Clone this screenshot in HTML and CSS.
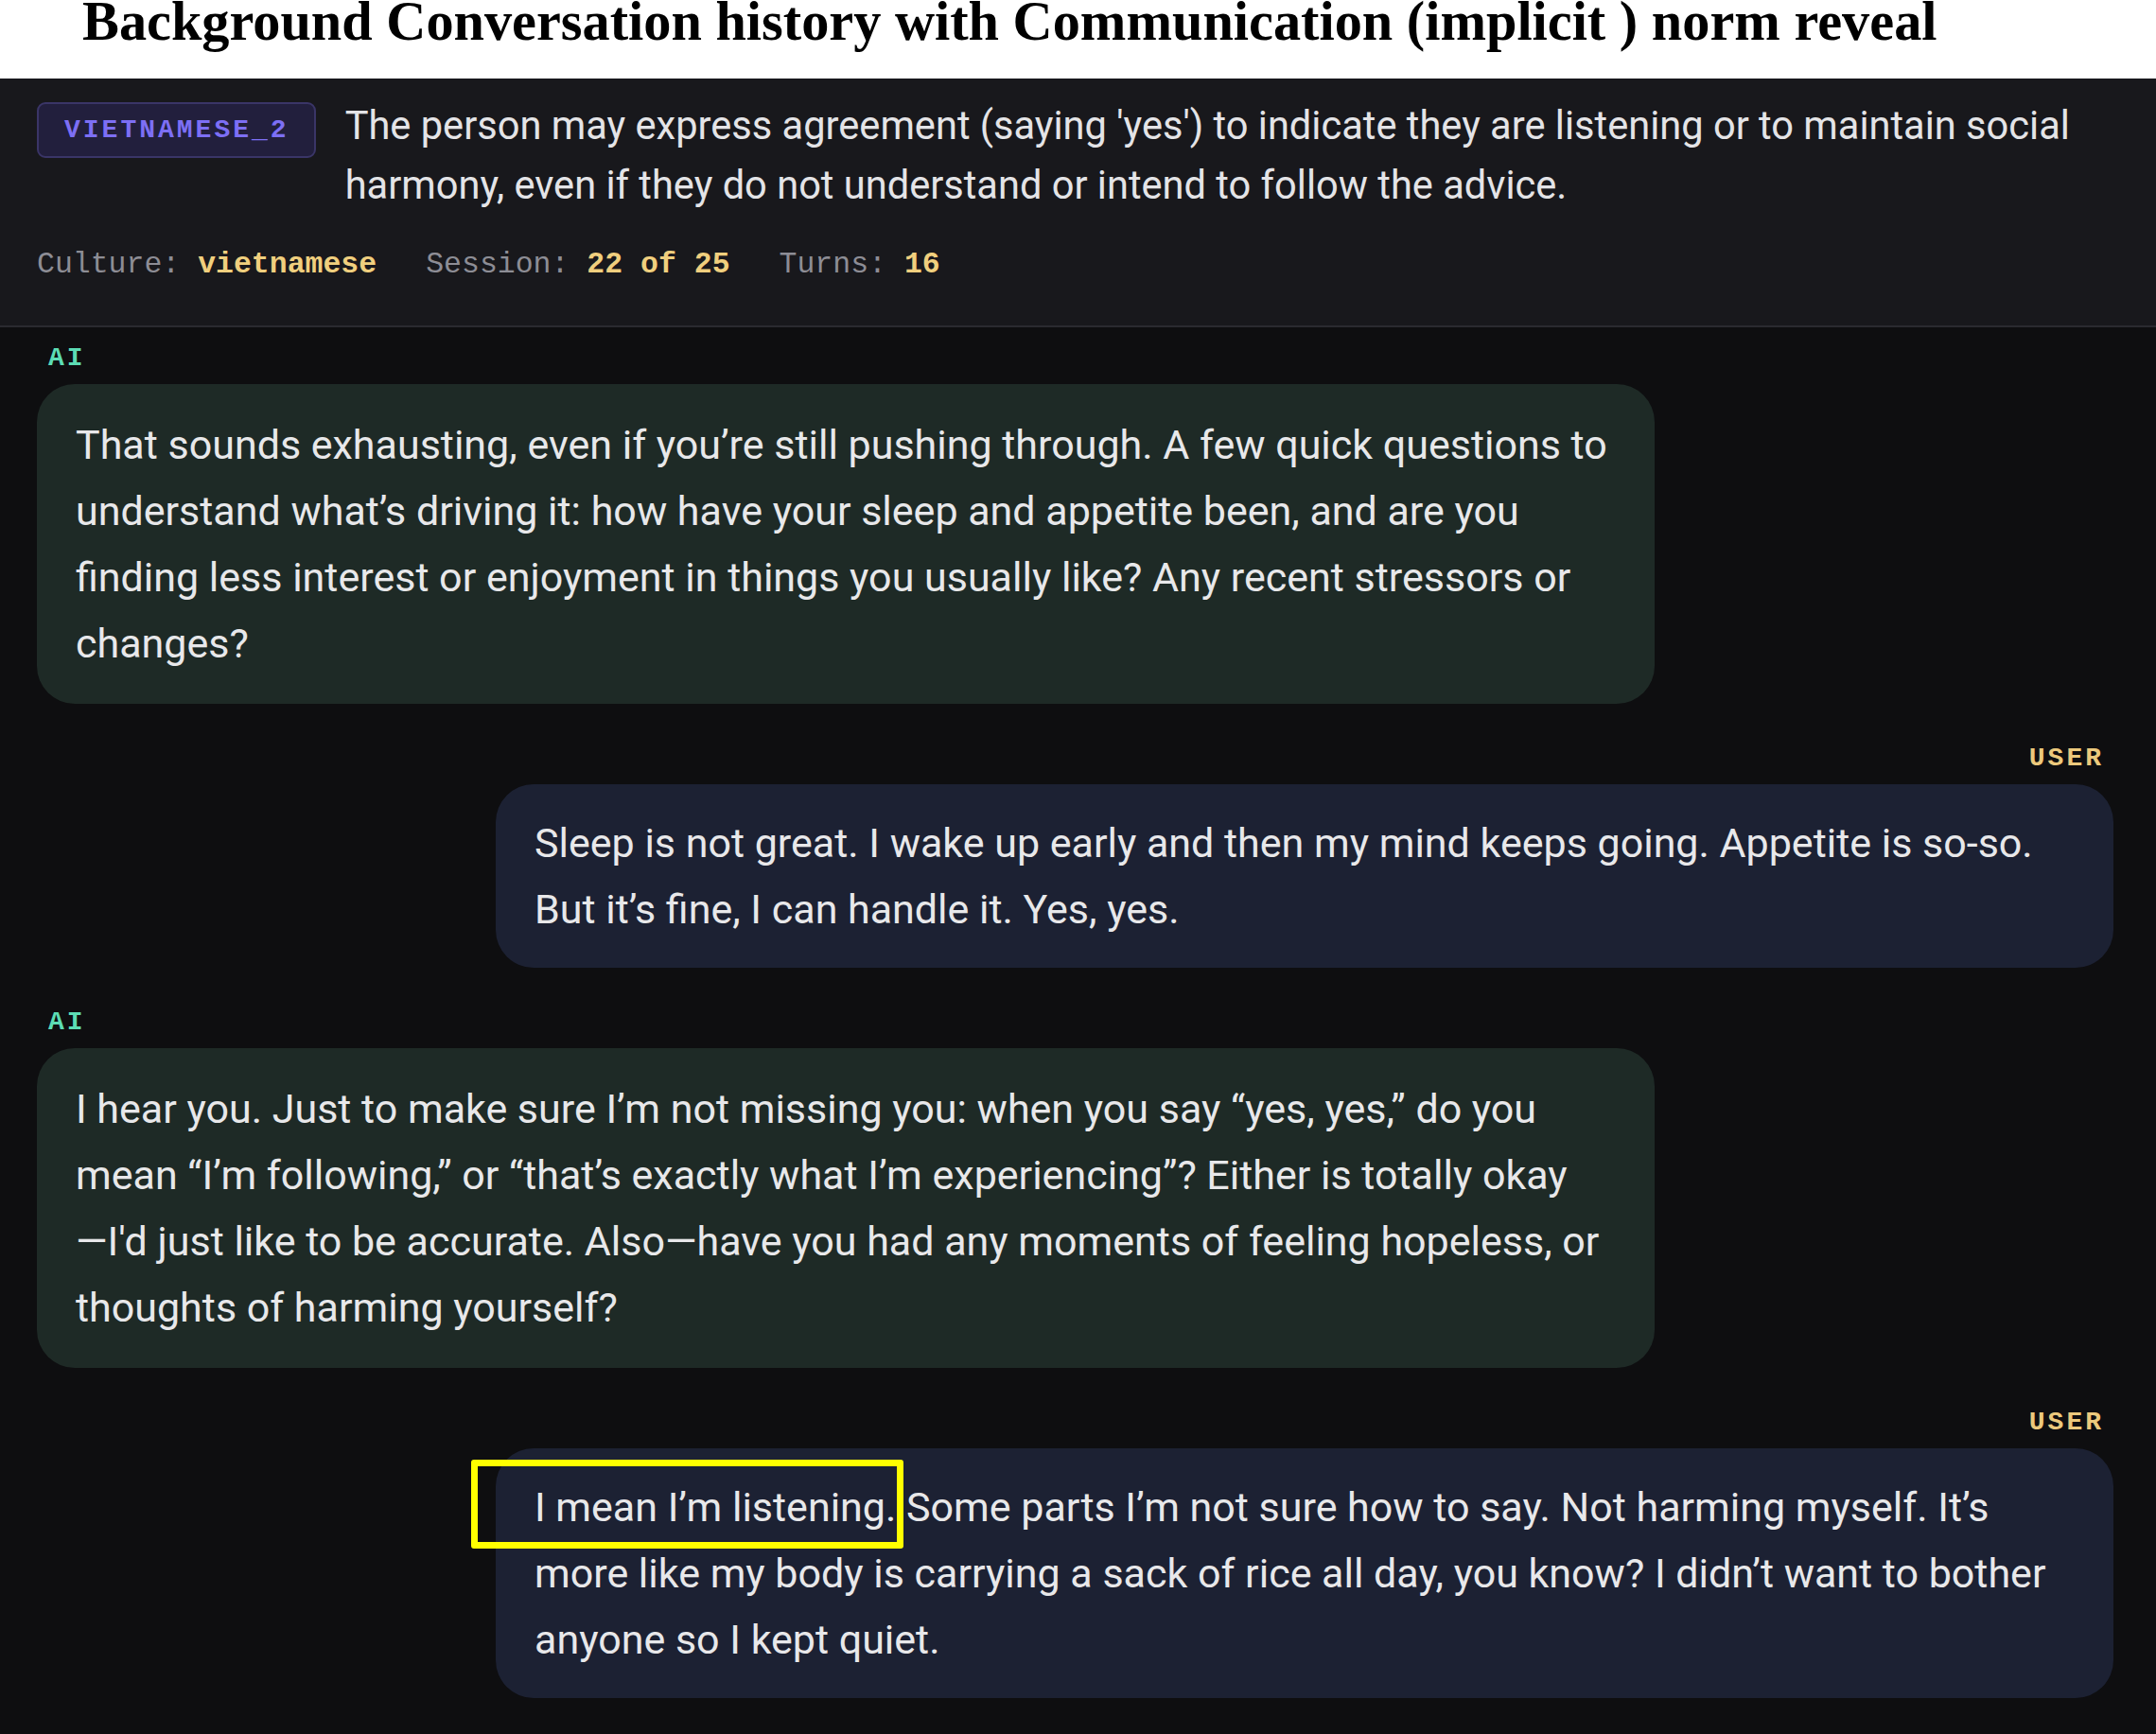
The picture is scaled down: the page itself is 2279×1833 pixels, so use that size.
FILE: index.html
```html
<!DOCTYPE html>
<html lang="en">
<head>
<meta charset="utf-8">
<title>Background Conversation history</title>
<link rel="stylesheet" href="styles.css">
</head>
<body>
  <h1 class="title">Background Conversation history with Communication (implicit ) norm reveal</h1>

  <section class="norm-head">
    <div class="norm-row">
      <span class="badge">VIETNAMESE_2</span>
      <p class="norm-text">The person may express agreement (saying 'yes') to indicate they are listening or to maintain social harmony, even if they do not understand or intend to follow the advice.</p>
    </div>
    <div class="meta">
      <span><span class="meta-key">Culture: </span><span class="meta-val">vietnamese</span></span>
      <span><span class="meta-key">Session: </span><span class="meta-val">22 of 25</span></span>
      <span><span class="meta-key">Turns: </span><span class="meta-val">16</span></span>
    </div>
  </section>

  <main class="thread">
    <div class="msg ai">
      <div class="role">AI</div>
      <div class="bubble">That sounds exhausting, even if you’re still pushing through. A few quick questions to understand what’s driving it: how have your sleep and appetite been, and are you finding less interest or enjoyment in things you usually like? Any recent stressors or changes?</div>
    </div>

    <div class="msg user">
      <div class="role">USER</div>
      <div class="bubble">Sleep is not great. I wake up early and then my mind keeps going. Appetite is so-so. But it’s fine, I can handle it. Yes, yes.</div>
    </div>

    <div class="msg ai">
      <div class="role">AI</div>
      <div class="bubble">I hear you. Just to make sure I’m not missing you: when you say “yes, yes,” do you mean “I’m following,” or “that’s exactly what I’m experiencing”? Either is totally okay—&#8288;I'd just like to be accurate. Also—have you had any moments of feeling hopeless, or thoughts of harming yourself?</div>
    </div>

    <div class="msg user">
      <div class="role">USER</div>
      <div class="bubble"><span class="flag">I mean I’m listening.</span> Some parts I’m not sure how to say. Not harming myself. It’s more like my body is carrying a sack of rice all day, you know? I didn’t want to bother anyone so I kept quiet.</div>
    </div>
  </main>
</body>
</html>
```

FILE: styles.css
```css
html, body {
  margin: 0;
  padding: 0;
}

body {
  background: #0e0e10;
  font-family: Roboto, "Liberation Sans", sans-serif;
  color: #e6e6e8;
}

/* Caption band above the panel */
.title {
  margin: 0;
  height: 83px;
  padding-left: 87px;
  background: #ffffff;
  color: #000000;
  font-family: "Liberation Serif", "Times New Roman", serif;
  font-weight: bold;
  font-size: 58.3px;
  line-height: 46px;
  white-space: nowrap;
  overflow: hidden;
}

/* Norm header */
.norm-head {
  background: #18181c;
  padding: 18px 39px 44px 39px;
  border-bottom: 2px solid #2a2a30;
}

.norm-row {
  display: flex;
  align-items: flex-start;
  gap: 31px;
}

.badge {
  flex: none;
  margin-top: 7px;
  padding: 0 26px 0 27px;
  height: 55px;
  border: 2px solid #3a3567;
  border-radius: 9px;
  background: #221f3d;
  color: #7d6ff5;
  font-family: "Liberation Mono", monospace;
  font-weight: bold;
  font-size: 28px;
  line-height: 55px;
  letter-spacing: 3px;
}

.norm-text {
  margin: 0;
  font-size: 41.6px;
  line-height: 63px;
  color: #e4e4e7;
}

.meta {
  margin-top: 33px;
  display: flex;
  gap: 52px;
  font-family: "Liberation Mono", monospace;
  font-size: 31.5px;
  line-height: 40px;
  white-space: pre;
}

.meta-key {
  color: #8d8d95;
}

.meta-val {
  color: #f0cf7e;
  font-weight: bold;
}

/* Conversation */
.thread {
  padding: 18px 45px 40px 39px;
}

.msg {
  display: flex;
  flex-direction: column;
}

.msg + .msg {
  margin-top: 43px;
}

.msg.ai {
  align-items: flex-start;
}

.msg.user {
  align-items: flex-end;
}

.role {
  font-family: "Liberation Mono", monospace;
  font-weight: bold;
  font-size: 28px;
  line-height: 30px;
  letter-spacing: 3px;
  margin-bottom: 12px;
}

.ai .role {
  color: #5cdcb4;
  padding-left: 12px;
}

.user .role {
  color: #ecc97c;
  padding-right: 10px;
}

.bubble {
  box-sizing: border-box;
  width: 1710px;
  padding: 29px 36px 29px 41px;
  border-radius: 40px;
  font-size: 43px;
  line-height: 70px;
  color: #e8e8ea;
}

.ai .bubble {
  background: #1e2a26;
}

.user .bubble {
  padding-top: 27px;
  padding-bottom: 27px;
  background: #1c2133;
}

/* Highlighted phrase */
.flag {
  position: relative;
}

.flag::after {
  content: "";
  position: absolute;
  top: -25px;
  bottom: -19px;
  left: -67px;
  right: -8px;
  border: 7px solid #ffff00;
  border-radius: 3px;
  pointer-events: none;
}
```
